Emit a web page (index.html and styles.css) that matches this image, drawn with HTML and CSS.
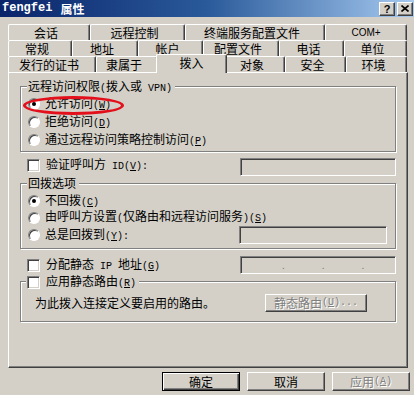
FILE: index.html
```html
<!DOCTYPE html>
<html>
<head>
<meta charset="utf-8">
<link rel="stylesheet" href="styles.css">
</head>
<body>
<div class="titlebar">
  <div class="title"><span class="en">fengfei</span>属性</div>
  <div class="tbtns">
    <span class="tbtn">?</span>
    <span class="tbtn"><svg width="8" height="7" viewBox="0 0 8 7"><path d="M0.5 0.5 L7.5 6.5 M7.5 0.5 L0.5 6.5" stroke="#000" stroke-width="1.6" fill="none"/></svg></span>
  </div>
</div>

<div class="tabs">
  <div class="tabrow r1">
    <div class="tab">会话</div>
    <div class="tab">远程控制</div>
    <div class="tab">终端服务配置文件</div>
    <div class="tab small">COM+</div>
  </div>
  <div class="tabrow r2">
    <div class="tab">常规</div>
    <div class="tab">地址</div>
    <div class="tab">帐户</div>
    <div class="tab">配置文件</div>
    <div class="tab">电话</div>
    <div class="tab">单位</div>
  </div>
  <div class="tabrow r3">
    <div class="tab">发行的证书</div>
    <div class="tab">隶属于</div>
    <div class="tab sel">拨入</div>
    <div class="tab">对象</div>
    <div class="tab">安全</div>
    <div class="tab">环境</div>
  </div>
</div>

<div class="panel">
  <div class="group g1">
    <div class="gtitle">远程访问权限<span class="l">(</span>拨入或<span class="l"> VPN)</span></div>
    <div class="opt h18 annotated">
      <span class="radio on"></span><span>允许访问<span class="l">(<u>W</u>)</span></span>
      <span class="ring"></span>
    </div>
    <div class="opt h18"><span class="radio"></span><span>拒绝访问<span class="l">(<u>D</u>)</span></span></div>
    <div class="opt h18"><span class="radio"></span><span>通过远程访问策略控制访问<span class="l">(<u>P</u>)</span></span></div>
  </div>

  <div class="fieldrow r-verify">
    <div class="opt"><span class="check"></span><span>验证呼叫方<span class="l"> ID(<u>V</u>):</span></span></div>
    <div class="input w156"></div>
  </div>

  <div class="group g2">
    <div class="gtitle">回拨选项</div>
    <div class="opt h16"><span class="radio on"></span><span>不回拨<span class="l">(<u>C</u>)</span></span></div>
    <div class="opt h17"><span class="radio"></span><span>由呼叫方设置<span class="l">(</span>仅路由和远程访问服务<span class="l">)(<u>S</u>)</span></span></div>
    <div class="optrow h18">
      <div class="opt"><span class="radio"></span><span>总是回拨到<span class="l">(<u>Y</u>):</span></span></div>
      <div class="input w148"></div>
    </div>
  </div>

  <div class="fieldrow r-ip">
    <div class="opt"><span class="check"></span><span>分配静态<span class="l"> IP </span>地址<span class="l">(<u>G</u>)</span></span></div>
    <div class="input w156 ip"><span>.</span><span>.</span><span>.</span></div>
  </div>

  <div class="group g3">
    <div class="gtitle ctitle"><span class="check"></span><span>应用静态路由<span class="l">(<u>R</u>)</span></span></div>
    <div class="routerow">
      <span>为此拨入连接定义要启用的路由。</span>
      <span class="btn routes disabled">静态路由<span class="l">(<u>U</u>)...</span></span>
    </div>
  </div>
</div>

<div class="btnrow">
  <span class="btn big default">确定</span>
  <span class="btn big">取消</span>
  <span class="btn big disabled">应用<span class="l">(<u>A</u>)</span></span>
</div>
</body>
</html>
```

FILE: styles.css
```css
body {
  margin: 0;
  width: 414px;
  height: 395px;
  overflow: hidden;
  background: #d4d0c8;
  color: #000;
  font-family: "Noto Sans CJK SC", "Liberation Sans", sans-serif;
  font-size: 12px;
  line-height: 14px;
}

u { text-decoration: underline; text-underline-offset: 1px; }

.l {
  font-family: "Liberation Mono", monospace;
  font-size: 10px;
}

/* title bar */
.titlebar {
  height: 17px;
  display: flex;
  align-items: center;
  justify-content: space-between;
  padding: 0 1px 0 2px;
  background: linear-gradient(to right, #0a246a 0%, #2a5a9a 50%, #a6caf0 100%);
}
.title {
  color: #fff;
  font-weight: bold;
  font-size: 12px;
  line-height: 17px;
  display: flex;
}
.title .en {
  font-family: "Liberation Mono", monospace;
  font-weight: bold;
  margin-right: 8px;
}
.tbtns { display: flex; gap: 2px; }
.tbtn {
  box-sizing: border-box;
  width: 16px;
  height: 14px;
  display: flex;
  align-items: center;
  justify-content: center;
  background: #d4d0c8;
  border: 1px solid;
  border-color: #fff #404040 #404040 #fff;
  box-shadow: inset -1px -1px #808080;
  font: bold 11px "Liberation Sans", sans-serif;
  line-height: 12px;
}

/* tabs */
.tabs {
  margin: 7px 0 0 8px;
  width: 399px;
}
.tabrow {
  display: grid;
  height: 16px;
}
.r1 { grid-template-columns: 82px 95px 140px 82px; }
.r2 { grid-template-columns: 64px 66px 65px 76px 65px 63px; }
.r3 { grid-template-columns: 88px 62px 67px 60px 61px 61px; }
.tab {
  box-sizing: border-box;
  border-top: 1px solid #fff;
  border-left: 1px solid #fff;
  border-right: 1px solid #404040;
  border-radius: 2px 2px 0 0;
  box-shadow: inset -1px 0 #808080;
  background: #d4d0c8;
  text-align: center;
  line-height: 15px;
  padding-right: 6px;
  white-space: nowrap;
}
.tab.small {
  font-family: "Liberation Sans", sans-serif;
  font-size: 10px;
  padding-right: 0;
}
.tab.sel {
  position: relative;
  z-index: 2;
  margin: -2px -2px -1px;
  line-height: 16px;
  padding-right: 0;
}

/* panel */
.panel {
  box-sizing: border-box;
  width: 400px;
  height: 296px;
  margin-left: 8px;
  border: 1px solid;
  border-color: #fff #404040 #404040 #fff;
  box-shadow: inset -1px -1px #808080;
  padding: 13px 0 0 11px;
}

.group {
  position: relative;
  box-sizing: border-box;
  width: 376px;
  border: 1px solid #808080;
  box-shadow: inset 1px 1px #fff, 1px 1px #fff;
  padding-left: 7px;
}
.gtitle {
  position: absolute;
  top: -8px;
  left: 6px;
  padding: 0 3px 0 1px;
  background: #d4d0c8;
  line-height: 14px;
  white-space: nowrap;
}
.ctitle {
  display: flex;
  align-items: center;
  gap: 6px;
  left: 5px;
}

.g1 { height: 66px; padding-top: 8px; }
.g2 { height: 66px; padding-top: 9px; margin-top: 7px; padding-right: 8px; }
.g3 { height: 41px; padding-top: 12px; margin-top: 7px; padding-left: 14px; padding-right: 28px; }

.opt {
  display: flex;
  align-items: center;
  gap: 5px;
  white-space: nowrap;
}
.h16 { height: 16px; }
.h17 { height: 17px; }
.h18 { height: 18px; }
.annotated { position: relative; }

.optrow {
  display: flex;
  align-items: center;
  justify-content: space-between;
}

.radio {
  position: relative;
  box-sizing: border-box;
  width: 12px;
  height: 12px;
  border-radius: 50%;
  border: 1px solid;
  border-color: #808080 #fff #fff #808080;
  box-shadow: inset 1px 1px #404040;
  background: #fff;
  flex: none;
}
.radio.on::after {
  content: "";
  position: absolute;
  left: 3px;
  top: 3px;
  width: 4px;
  height: 4px;
  border-radius: 50%;
  background: #000;
}

.check {
  box-sizing: border-box;
  width: 13px;
  height: 13px;
  border: 1px solid;
  border-color: #808080 #fff #fff #808080;
  box-shadow: inset 1px 1px #404040, inset -1px -1px #d4d0c8;
  background: #fff;
  flex: none;
}

.ring {
  position: absolute;
  left: -5px;
  top: 1px;
  width: 101px;
  height: 19px;
  box-sizing: border-box;
  border: 3px solid #e3101c;
  border-radius: 50%;
}

.fieldrow {
  box-sizing: border-box;
  width: 376px;
  display: flex;
  align-items: flex-start;
  justify-content: space-between;
  padding-left: 7px;
}
.fieldrow .opt { gap: 6px; }
.r-verify { margin-top: 5px; }
.r-ip { margin-top: 6px; }
.r-ip .opt { margin-top: 2px; }

.input {
  box-sizing: border-box;
  height: 18px;
  border: 1px solid;
  border-color: #808080 #fff #fff #808080;
  box-shadow: inset 1px 1px #404040, inset -1px -1px #d4d0c8;
  background: #d4d0c8;
  margin-top: 1px;
}
.w156 { width: 156px; }
.w148 { width: 148px; margin-top: 0; }
.ip {
  display: flex;
  gap: 37px;
  padding-left: 41px;
  color: #808080;
  font-size: 10px;
  line-height: 15px;
}

.routerow {
  display: flex;
  align-items: center;
  justify-content: space-between;
  height: 18px;
}

.btn {
  box-sizing: border-box;
  display: flex;
  align-items: center;
  justify-content: center;
  border: 1px solid;
  border-color: #fff #404040 #404040 #fff;
  box-shadow: inset -1px -1px #808080;
  background: #d4d0c8;
  white-space: nowrap;
}
.routes { width: 102px; height: 18px; }
.disabled {
  color: #808080;
  text-shadow: 1px 1px #fff;
}

.btnrow {
  display: flex;
  justify-content: flex-end;
  gap: 7px;
  padding: 4px 4px 0 0;
}
.big { width: 78px; height: 19px; }
.default {
  border: 1px solid #000;
  box-shadow: inset 1px 1px #fff, inset -1px -1px #404040, inset -2px -2px #808080;
}
```
